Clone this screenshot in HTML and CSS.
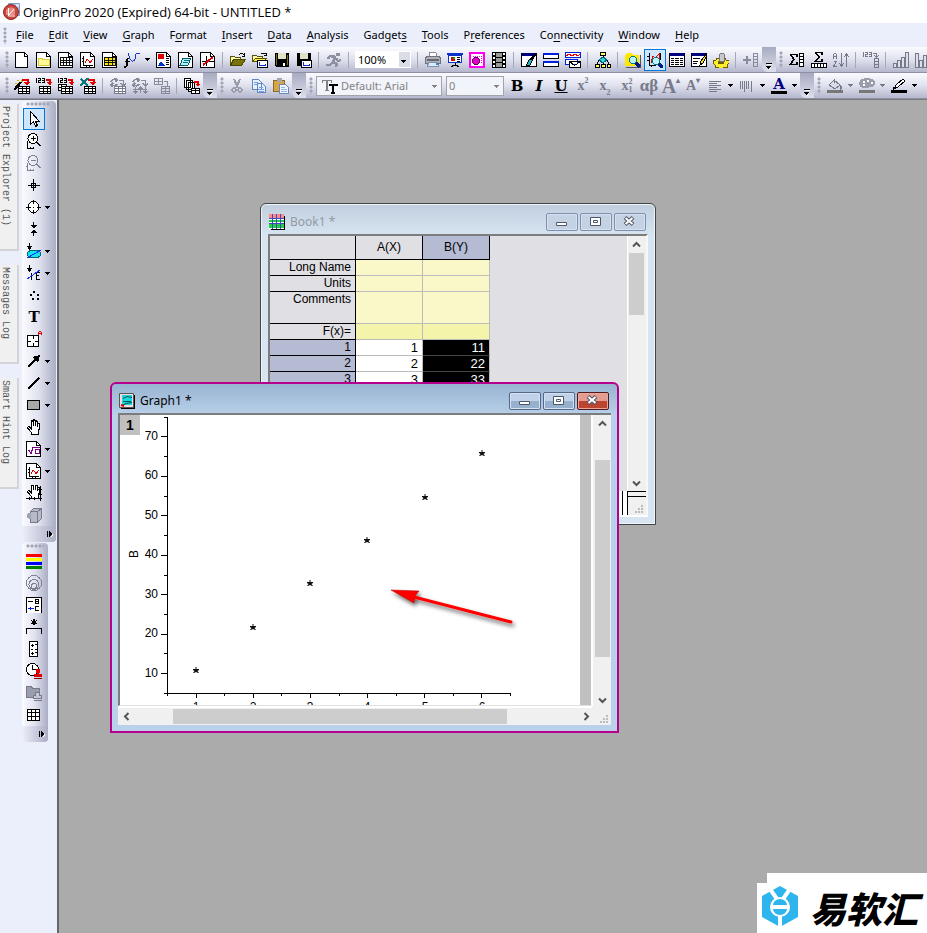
FILE: index.html
```html
<!DOCTYPE html>
<html lang="en">
<head>
<meta charset="utf-8">
<title>OriginPro 2020</title>
<link rel="stylesheet" href="styles.css">
</head>
<body>
<svg class="sprite" aria-hidden="true">
  <symbol id="dd" viewBox="0 0 5 3"><path d="M0 0h5v1H0zM1 1h3v1H1zM2 2h1v1H2z" fill="currentColor"/></symbol>
  <symbol id="more" viewBox="0 0 6 7"><path d="M0 0h6v1H0zM0 3h5v1H0zM1 4h3v1H1zM2 5h1v1H2z"/><path d="M1 1h5v1H1zM3 6h1v1H3zM4 5h1v1H4z" fill="#fff"/></symbol>
  <symbol id="side" viewBox="0 0 6 7"><path d="M0 0h1v6H0zM2 0h1v6H2zM3 1h1v4H3zM4 2h1v2H4z"/><path d="M5 3h1v2H5zM4 5h1v1H4z" fill="#fff"/></symbol>
  <symbol id="page" viewBox="0 0 16 16"><path d="M.5.5h10l4 4v11H.5z" fill="#fff" stroke="#000"/><path d="M10.500.5v4h4" fill="none" stroke="#000"/></symbol>
  <symbol id="new" viewBox="0 0 16 16"><path d="M1.500.5h9l3 3v12h-12z" fill="#fff" stroke="#000"/><path d="M10.500.5v4h3" fill="none" stroke="#000"/></symbol>
  <symbol id="folder" viewBox="0 0 16 16"><use href="#page"/><path d="M2.500 6.500h4v1h7v6h-11z" fill="#fff99a" stroke="#d6c93e"/></symbol>
  <symbol id="book" viewBox="0 0 16 16"><use href="#page"/><path d="M2 5h12v9H2z" fill="#111"/><path d="M3 6h2v2H3zm3 0h2v2H6zm3 0h2v2H9zm3 0h2v2h-2zM3 9h2v1H3zm3 0h2v1H6zm3 0h2v1H9zm3 0h2v1h-2zM3 11h2v2H3zm3 0h2v2H6zm3 0h2v2H9zm3 0h2v2h-2z" fill="#fff"/></symbol>
  <symbol id="graph" viewBox="0 0 16 16"><use href="#page"/><path d="M3.500 4v9.500H13M2 6.500h1M2 9.500h1M6.500 14v1M9.500 14v1" fill="none" stroke="#000"/><path d="M5 11l2-4 2 2 1 2 3-4" fill="none" stroke="#e00000"/></symbol>
  <symbol id="matrix" viewBox="0 0 16 16"><use href="#page"/><path d="M2 5h12v9H2z" fill="#111"/><path d="M3 6h3v2H3zm4 0h3v2H7zm4 0h2v2h-2zM3 9h3v1H3zm4 0h3v1H7zm4 0h2v1h-2zM3 11h3v2H3zm4 0h3v2H7zm4 0h2v2h-2z" fill="#ffe600"/></symbol>
  <symbol id="fx" viewBox="0 0 16 16"><path d="M5 6.500q-2-1-2 2v4q0 3-3 2.500M.5 9.500h5" fill="none" stroke="#000" stroke-width="1.500"/><path d="M4.500 1q1 8 4 8t3-6q1-3 4-1" fill="none" stroke="#1439c8"/></symbol>
  <symbol id="layout" viewBox="0 0 16 16"><use href="#page"/><path d="M2 2h6v5H2z" fill="#e00000"/><path d="M2 14l3-5 4 5z" fill="#0030d0"/><path d="M10 6.500h3M10 8.500h3M10 10.500h3M10 12.500h3" stroke="#000"/></symbol>
  <symbol id="notes" viewBox="0 0 16 16"><use href="#page"/><path d="M5 6h8l-3 7H2z" fill="#b5f3f5" stroke="#056"/><path d="M6 8.500h5M5 10.500h5" stroke="#078"/></symbol>
  <symbol id="image" viewBox="0 0 16 16"><use href="#page"/><path d="M6.500 4v10M2 9.500h12" stroke="#000"/><path d="M3 13L13 5" stroke="#e00000" stroke-width="2"/></symbol>
  <symbol id="open" viewBox="0 0 16 16"><path d="M.5 12.500v-8h4l1 1h5v3" fill="#fff9a0" stroke="#55500a"/><path d="M.5 13.500l3-6h12l-4 6z" fill="#77740a" stroke="#4a4700"/><path d="M9 3q3-3 5 0M14.500 1v3h-3" fill="none" stroke="#000"/></symbol>
  <symbol id="openx" viewBox="0 0 16 16"><path d="M.5 9.500v-6h4l1 1h5v3" fill="#fff9a0" stroke="#55500a"/><path d="M.5 9.500l3-3h11l-3 3z" fill="#ffee45" stroke="#554f00"/><path d="M9 2q3-2 5 0M14.500.5v3h-3" fill="none" stroke="#000"/><path d="M5.500 8.500h10v7h-10z" fill="#fff" stroke="#000"/><path d="M7.500 10v3.500h6v-2" fill="none" stroke="#1030d0"/></symbol>
  <symbol id="save" viewBox="0 0 16 16"><path d="M1 1h14v14H2l-1-1z"/><path d="M4 1h8v6H4z" fill="#dfe2c4"/><path d="M2 2h1v11H2zM13 3h1v10h-1z" fill="#77740a"/><path d="M9 11h2v3H9z" fill="#fff"/></symbol>
  <symbol id="savex" viewBox="0 0 16 16"><path d="M1 1h14v13H1z"/><path d="M4 1h8v6H4z" fill="#dfe2c4"/><path d="M5.500 8.500h10v7h-10z" fill="#fff" stroke="#000"/><path d="M7.500 10v3.500h6v-2" fill="none" stroke="#1030d0"/></symbol>
  <symbol id="run" viewBox="0 0 16 16"><circle cx="12" cy="2.500" r="2" fill="#8d90a0"/><path d="M10 5L4 4 2 7M9 5l-2 5 4 2-1 3M7 10l-3 3H0M10 6l2 3 3-1" fill="none" stroke="#8d90a0" stroke-width="2.500"/></symbol>
  <symbol id="print" viewBox="0 0 16 16"><path d="M4.500 5V.5h6l1 1V5" fill="#fff" stroke="#8a8a94"/><path d="M.5 5.500l2-1h11l2 1v6H.5z" fill="#b0b1b8" stroke="#70717b"/><path d="M2 7h12v2H2z" fill="#666874"/><path d="M3.500 10.500h9l1 4h-11z" fill="#dcecff" stroke="#8090a8"/><path d="M11 11h2v2h-2z" fill="#2288d8"/></symbol>
  <symbol id="slide" viewBox="0 0 16 16"><path d="M0 1h16v2H0z" fill="#0c32c8"/><path d="M1.500 3.500h13v7h-13z" fill="#fff" stroke="#0c32c8"/><circle cx="6" cy="7" r="2.500" fill="#e00000"/><path d="M6 7V4.500A2.500 2.500 0 0 1 8.500 7z" fill="#00a020"/><path d="M10 5.500h3M10 7.500h3M10 9.500h3M8 11v2M4 15l3-2h2l3 2" fill="none" stroke="#000"/></symbol>
  <symbol id="master" viewBox="0 0 16 16"><path d="M1 1h14v14H1z" fill="#fff" stroke="#ff00ee" stroke-width="2"/><circle cx="7" cy="9" r="3.500" fill="#e000c8" stroke="#600060"/><path d="M12.500 4v8M4 4.500h7" stroke="#ff00ee" stroke-dasharray="1 1"/></symbol>
  <symbol id="film" viewBox="0 0 16 16"><path d="M1 0h14v16H1z"/><path d="M5 1h6v4H5zM5 6h6v4H5zM5 11h6v4H5z" fill="#999"/><path d="M3 1v15M13 1v15" stroke="#fff" stroke-width="2" stroke-dasharray="2 2"/></symbol>
  <symbol id="code" viewBox="0 0 16 16"><path d="M.5 1.500h15v13H.5z" fill="#fff" stroke="#000"/><path d="M1 1h14v3H1z" fill="#000080"/><path d="M5 14l3-6 4-1-3 6z" fill="#12b8c8" stroke="#000"/><path d="M9 8l6-6" stroke="#000" stroke-width="2"/></symbol>
  <symbol id="tile" viewBox="0 0 16 16"><path d="M.5 1.500h15v5H.5zM.5 9.500h15v5H.5z" fill="#fff" stroke="#000"/><path d="M0 1h16v2H0zM0 9h16v2H0z" fill="#0020e0"/></symbol>
  <symbol id="mail" viewBox="0 0 16 16"><path d="M.5.5h15v5H.5z" fill="#fff" stroke="#0020e0"/><path d="M1 4l3-2 3 2 3-2 3 2 2-2" fill="none" stroke="#e00000"/><path d="M.5 7.500h12v5H.5z" fill="#fff" stroke="#0020e0"/><path d="M4.500 9.500h11v6h-11zl5 4 6-4" fill="#fff" stroke="#000"/></symbol>
  <symbol id="tree" viewBox="0 0 16 16"><path d="M5.500.5h5v3h-5zM.5 12.500h4v3h-4zM6.500 12.500h4v3h-4zM12 12.500h3.500v3H12z" fill="#ffff60" stroke="#000"/><path d="M8 4v8M4 8L2 12M12 8l2 4" stroke="#000"/><path d="M8 5l4 3-4 3-4-3z" fill="#30d8e0" stroke="#067"/></symbol>
  <symbol id="lens" viewBox="0 0 16 16"><path d="M10 10l5 5" stroke="#001a80" stroke-width="3"/><circle cx="8" cy="8" r="3.500" fill="#b8f4f8" stroke="#087888"/></symbol>
  <symbol id="find" viewBox="0 0 16 16"><path d="M0 3l2-2h5l1 2h6v11H0z" fill="#ffe800"/><path d="M15 3v12H1" fill="none" stroke="#555"/><use href="#lens"/></symbol>
  <symbol id="findg" viewBox="0 0 16 16"><path d="M2.500 1v12.500H9M0 4.500h2M0 8.500h2M4.500 15v-2" fill="none" stroke="#000"/><path d="M4 11l2-7 2 2 4-4v6" fill="none" stroke="#e00000"/><path d="M13.500 1v7" stroke="#000"/><use href="#lens" x="1" y="1"/></symbol>
  <symbol id="list" viewBox="0 0 16 16"><path d="M.5 1.500h15v13H.5z" fill="#fff" stroke="#000"/><path d="M1 1h14v3H1z" fill="#000080"/><path d="M2 6.500h3m1 0h4m1 0h3M2 8.500h3m1 0h4m1 0h3M2 10.500h3m1 0h4m1 0h3M2 12.500h3m1 0h4m1 0h3" stroke="#000"/></symbol>
  <symbol id="edit" viewBox="0 0 16 16"><path d="M.5 1.500h15v13H.5z" fill="#fff" stroke="#000"/><path d="M1 1h14v3H1z" fill="#000080"/><path d="M2 6.500h7M2 9.500h5M2 11.500h4" stroke="#000"/><path d="M9 13l1-4 5-7 1 1-4 8z" fill="#ffe000" stroke="#000"/></symbol>
  <symbol id="gear" viewBox="0 0 16 16"><path d="M0 8h3l1-2h8l1 2h3v3l-2 2v2h-3l-1 1H6l-1-1H2v-2l-2-2z" fill="#ffee28" stroke="#665c00"/><ellipse cx="8" cy="10.500" rx="3" ry="2" fill="#665c00"/><path d="M6 3l2-2 3 1v7H6z" fill="#c8c8ce" stroke="#777"/></symbol>
  <symbol id="addcol" viewBox="0 0 16 16"><path d="M0 8h8M4 4v8" stroke="#888b9b" stroke-width="2"/><path d="M10.500 1.500h4v13h-4zM10 4.500h5M10 7.500h5M10 10.500h5" fill="none" stroke="#888b9b"/></symbol>
  <symbol id="sumcol" viewBox="0 0 16 16"><path d="M8 5V2.500H1.500L5 7.500l-4 5h7V10" fill="none" stroke="#000" stroke-width="1.500"/><path d="M10.500 1.500h4v13h-4zM10 4.500h5M10 7.500h5M10 10.500h5" fill="#fff" stroke="#000"/></symbol>
  <symbol id="sumrow" viewBox="0 0 16 16"><path d="M11 3V.5H4.500L8 5l-4 4.500h7V7" fill="none" stroke="#000" stroke-width="1.500"/><path d="M.5 11.500h15v4H.5zM3.500 11v4M6.500 11v4M9.500 11v4M12.500 11v4" fill="#fff" stroke="#000"/></symbol>
  <symbol id="sort" viewBox="0 0 16 16"><path d="M.5 7V3l1-2h1l1 2v4M1 4.500h3M.5 9.500h3l-3 5h3.500M8.500 1v13M6 11l2.500 3 2.500-3M13.500 2v13M11 5l2.500-3L16 5" fill="none" stroke="#777a8a"/></symbol>
  <symbol id="rank" viewBox="0 0 16 16"><path d="M.5 0v5M2 .5h2v2H2.500v2h2M6 .5h2v4H6m0-2h2M10 1.500h3.500v3M11 3l2.500 2L16 3M11.500 6.500h4v9h-4zM11 9.500h5M11 12.500h5" fill="none" stroke="#777a8a"/></symbol>
  <symbol id="bars" viewBox="0 0 16 16"><path d="M.5 11.500h3v4h-3zM4.500 8.500h3v7h-3zM8.500 5.500h3v10h-3zM12.500.5h3v15h-3z" fill="#dddfe9" stroke="#777a8a"/></symbol>
  <symbol id="bars2" viewBox="0 0 16 16"><path d="M.5 1.500h3v14h-3zM4.500 8.500h3v7h-3zM8.500 3.500h3v12h-3zM12.500 6.500h3v9h-3z" fill="#dddfe9" stroke="#777a8a"/></symbol>
  <symbol id="grid" viewBox="0 0 16 16"><path d="M4.500 8.500h11v7h-11zM4 10.500h12M4 13.500h12M8.500 8v8M12.500 8v8" fill="#fff" stroke="currentColor"/></symbol>
  <symbol id="redarrow" viewBox="0 0 16 16"><path d="M8 2h5.500V5" fill="none" stroke="#e00000" stroke-width="2"/><path d="M10 4h6l-3 4z" fill="#e00000"/></symbol>
  <symbol id="wizard" viewBox="0 0 16 16"><use href="#grid"/><use href="#redarrow"/><path d="M0 12l7-8" stroke="#000" stroke-width="2.500"/><path d="M3 2.500h2M7 1.500v2M1 5.500h2M7 3.500h2" stroke="#d0b800"/></symbol>
  <symbol id="imp1" viewBox="0 0 16 16"><use href="#grid" x="-1"/><path d="M10 2h4v3" fill="none" stroke="#e00000" stroke-width="2"/><path d="M11 4h5l-2 4z" fill="#e00000"/><path d="M.5 0v5M2 .5h2v2H2.500v2H5M6 .5h2.500v4H6m0-2h2" fill="none" stroke="#000"/></symbol>
  <symbol id="imp2" viewBox="0 0 16 16"><path d="M.5 6.500h8v6h-8zM0 9.500h8M3.500 6v6" fill="#fff" stroke="#000"/><use href="#imp1"/></symbol>
  <symbol id="excel" viewBox="0 0 16 16"><use href="#grid"/><use href="#redarrow"/><path d="M1 1l7 7M8 0L0 8" stroke="#087878" stroke-width="2.500"/></symbol>
  <symbol id="recalc" viewBox="0 0 16 16"><use href="#grid"/><path d="M1 4q2-4 5-2M5 0l2 2-2 2M7 6q-2 3-5 1M3 5L1 7l2 2M9 2.500h4.500V7M11 5l2.500 3L16 5" fill="none" stroke="#888b9b" stroke-width="1.500"/></symbol>
  <symbol id="recalc2" viewBox="0 0 16 16"><path d="M1 4q2-4 5-2M5 0l2 2-2 2M7 6q-2 3-5 1M3 5L1 7l2 2M9 2.500h4.500V7M11 5l2.500 3L16 5M3.500 9v6M8.500 9v6M13.500 9v6M1 11.500h14M2 13l1.500 2L5 13M7 11l1.500-2 1.500 2M12 13l1.500 2 1.500-2" fill="none" stroke="#888b9b" stroke-width="1.500"/></symbol>
  <symbol id="tables" viewBox="0 0 16 16"><path d="M.5.500h8v6h-8zM0 3.500h8M4.500 0v6M7.500 8.500h8v7h-8zM7 10.500h9M7 13.500h9M11.500 8v8M10 3.500h3.500v4" fill="none" stroke="#888b9b"/></symbol>
  <symbol id="stack" viewBox="0 0 16 16"><path d="M.5.5h6v9h-6zM2.500 2.500h6v9h-6zM4.500 4.500h6v9h-6z" fill="#fff" stroke="#000"/><path d="M10 4h4v3" fill="none" stroke="#e00000" stroke-width="2"/><path d="M11 6h5l-2 3z" fill="#e00000"/><path d="M7.500 10.500h8v5h-8zM7 12.500h9M11.500 10v6" fill="#fff" stroke="#000"/></symbol>
  <symbol id="cut" viewBox="0 0 16 16"><path d="M5 1l4 9M11 1L7 10" stroke="#9a9daa" stroke-width="2"/><circle cx="5" cy="12" r="2" fill="none" stroke="#9a9daa" stroke-width="1.500"/><circle cx="11" cy="12" r="2" fill="none" stroke="#9a9daa" stroke-width="1.500"/></symbol>
  <symbol id="copy" viewBox="0 0 16 16"><path d="M1.500 1.500h6l3 3v7h-9zM6.500 5.500h5l3 3v6h-8z" fill="#e7f0ff" stroke="#6586bd"/><path d="M3 4.500h4M3 6.500h3M8 9.500h4M8 11.500h5M8 13.500h5" stroke="#6fa0e8"/></symbol>
  <symbol id="paste" viewBox="0 0 16 16"><path d="M.5 2.500h11v11H.5z" fill="#d8a448" stroke="#8c6a28"/><path d="M4 0h5v4H4z" fill="#a8a8b0"/><path d="M6.500 6.500h6l3 3v6h-9z" fill="#f0f6ff" stroke="#6c88b4"/><path d="M8 9.500h4M8 11.500h6M8 13.500h6" stroke="#8fb2e8"/></symbol>
  <symbol id="align" viewBox="0 0 16 16"><path d="M2 3.500h12M2 5.500h8M2 7.500h12M2 9.500h8M2 11.500h12M2 13.500h8" stroke="#777a8a"/></symbol>
  <symbol id="pattern" viewBox="0 0 16 16"><path d="M3.500 3v8M5.500 3v11M7.500 3v8M9.500 3v8M12.500 3v11M1.500 3v8" stroke="#777a8a"/></symbol>
  <symbol id="bucket" viewBox="0 0 16 16"><path d="M2 7l5-5 6 5-5 4zM7 5V1" fill="#d8dae4" stroke="#777a8a"/><path d="M13 7q2 3 0 4" fill="none" stroke="#777a8a" stroke-width="2"/><path d="M0 12h16v3H0z" fill="#777"/></symbol>
  <symbol id="palette" viewBox="0 0 16 16"><path d="M0 5q1-5 9-5 7 1 7 5 0 4-5 4-2 2-5 1-6 0-6-5z" fill="#9a9dac"/><path d="M4 4h2M8 3h2M12 5h2M4 7h2" stroke="#fff" stroke-width="2"/><path d="M0 12h16v3H0z" fill="#777"/></symbol>
  <symbol id="pen" viewBox="0 0 16 16"><path d="M4 10l1-3 7-6 2 2-7 6z" fill="#fff" stroke="#000"/><path d="M2 11l3-2" stroke="#000" stroke-width="2"/><path d="M0 12h16v3H0z"/></symbol>
  <symbol id="pointer" viewBox="0 0 16 16"><path d="M4.500.5v13l3-3 2 5 2-1-2-4h4z" fill="#fff" stroke="#000"/></symbol>
  <symbol id="zoomin" viewBox="0 0 16 16"><circle cx="7" cy="5.500" r="5" fill="#fff" stroke="currentColor"/><path d="M4.500 5.500h5M7 3v5" stroke="currentColor"/><path d="M10.500 9l4 4" stroke="currentColor" stroke-width="2"/><path d="M1.500 8v7.500h6V14M4.500 14v2" fill="none" stroke="currentColor"/></symbol>
  <symbol id="zoomout" viewBox="0 0 16 16"><circle cx="7" cy="5.500" r="5" fill="none" stroke="#7e8192"/><path d="M4.500 5.500h5" stroke="#7e8192"/><path d="M10.500 9l4 4" stroke="#7e8192" stroke-width="2"/><path d="M1.500 8v7.500h6V14M0 11.500h2M4.500 14v2" fill="none" stroke="#7e8192"/></symbol>
  <symbol id="cross" viewBox="0 0 16 16"><path d="M7.500 2v12M2 8.500h12M5.500 6.500h4v4h-4z" fill="none" stroke="#000"/></symbol>
  <symbol id="target" viewBox="0 0 16 16"><circle cx="7.500" cy="8" r="5.500" fill="#fff" stroke="#000"/><path d="M7.500 1v4M7.500 11v4M0 8.500h4.500M10.500 8.500H15M7 8.500h1" stroke="#000"/></symbol>
  <symbol id="select" viewBox="0 0 16 16"><path d="M4 4h7L7.500 7.500zM4 12h7L7.500 8.500z"/><path d="M7.500 1v5M7.500 10v5" stroke="#000"/></symbol>
  <symbol id="mask" viewBox="0 0 16 16"><ellipse cx="8" cy="11" rx="7" ry="4" fill="#18e2ea" stroke="#067"/><path d="M1 15L15 7" stroke="#1030ff"/><path d="M3.500 0v4M1 3h5L3.500 6z" stroke="#000"/></symbol>
  <symbol id="region" viewBox="0 0 16 16"><path d="M5.500 15V8M14 7.500h-4v7h4M10 10.500h3" fill="none" stroke="#000"/><path d="M1 14L14 5" stroke="#1030ff"/><path d="M3.500 0v4M1 3h5L3.500 6z" stroke="#000"/></symbol>
  <symbol id="dots" viewBox="0 0 16 16"><path d="M7 4h2v2H7zM4 7h2v2H4zM11 7h2v2h-2zM6 11h2v2H6zM11 11h2v2h-2z"/></symbol>
  <symbol id="annot" viewBox="0 0 16 16"><path d="M1.500 4.500h11v11h-11zM7.500 4v4M7.500 12v4M1 10.500h4M9 10.500h4" fill="#fff" stroke="#000"/><path d="M12.500 4V1.500L14 0l1.500 1.500V4M12 2.500h4" fill="none" stroke="#e00000"/></symbol>
  <symbol id="arrow" viewBox="0 0 16 16"><path d="M2 14L11 5" stroke="#000" stroke-width="2"/><path d="M6 4l8-2-2 8z"/></symbol>
  <symbol id="line" viewBox="0 0 16 16"><path d="M2 14L13 3" stroke="#000" stroke-width="1.500"/></symbol>
  <symbol id="rect" viewBox="0 0 16 16"><path d="M1.500 3.500h12v9h-12z" fill="#a8a8a8" stroke="#000"/></symbol>
  <symbol id="hand" viewBox="0 0 16 16"><path d="M5.500 15.500v-2L1.500 9q0-2 2-1L5 9.500v-7q1-1.500 2 0v4-5q1-1.500 2 0v5-4q1-1.500 2 0v5-3q1.500-1 2 0v6l-1 3v2z" fill="#fff" stroke="#000"/></symbol>
  <symbol id="formula" viewBox="0 0 16 16"><use href="#page"/><path d="M2 10l1-1 2 4 2-7h7M13 8.500H9.500v4H13V8" fill="none" stroke="#80008c"/></symbol>
  <symbol id="pan" viewBox="0 0 16 16"><use href="#hand" y="-2"/><path d="M14.500 1v15M0 13.500h16M12 4.500h4M12 9.500h4M3.500 12v3M8.500 12v3" stroke="#000"/></symbol>
  <symbol id="cube" viewBox="0 0 16 16"><path d="M4.500 4.500l3-3h8v10l-4 4h-7z" fill="#b7bac8" stroke="#777a8a"/><path d="M4.500 4.500h7v11M11.500 4.500l4-3" fill="none" stroke="#777a8a"/><path d="M3 6q-3 1-2 5l4 1V6" fill="#a0a3b4"/></symbol>
  <symbol id="colors" viewBox="0 0 16 16"><path d="M0 1h16v3H0z" fill="#f00"/><path d="M0 5h16v3H0z" fill="#ff0"/><path d="M0 9h16v3H0z" fill="#00f"/><path d="M0 13h16v3H0z" fill="#008000"/></symbol>
  <symbol id="rings" viewBox="0 0 16 16"><circle cx="8" cy="8" r="7.500" fill="none" stroke="#7f8294"/><circle cx="8" cy="9.500" r="5" fill="none" stroke="#7f8294"/><circle cx="8" cy="11" r="2.500" fill="none" stroke="#7f8294"/></symbol>
  <symbol id="legend" viewBox="0 0 16 16"><path d="M.5 16V.500h15V16" fill="#fff" stroke="#000"/><path d="M2 4.500h5M9.500 2v5M9 2.500h3.500v2H9m3.500 0v2H9M12.500 9.500h-3v4h3.500" fill="none" stroke="#000"/><path d="M2 11.500h6M4.500 10v3" stroke="#0020e0"/></symbol>
  <symbol id="bracket" viewBox="0 0 16 16"><path d="M8 0v6M5 1.500l6 3.500M11 1.500L5 5M.5 15V9.500h15V15" fill="none" stroke="#000" stroke-width="1.200"/></symbol>
  <symbol id="scale" viewBox="0 0 16 16"><path d="M3.500.5h8v15h-8z" fill="#fff" stroke="#000"/><path d="M5 4.500h3M6.500 3v3M9 3.500h2M5 8.500h2M9 8.500h2M5 12.500h3M6.500 11v3M9 11.500h2" stroke="#000"/></symbol>
  <symbol id="clock" viewBox="0 0 16 16"><circle cx="6.500" cy="6.500" r="6" fill="#fff" stroke="#000"/><path d="M6.500 2v4.500H10" fill="none" stroke="#000"/><path d="M10 6h4v3l-1 2h3v3H8v-3h3l-1-2z" fill="#e00000"/><path d="M8 15.500h8" stroke="#800"/></symbol>
  <symbol id="stamp" viewBox="0 0 16 16"><path d="M.5 1.500h5l1 2h7v9H.5z" fill="#9a9dac" stroke="#777a8a"/><path d="M9.500 7.500h4v3h2v3h-8v-3h2zM8 15.500h8" fill="#c5c7d3" stroke="#777a8a"/></symbol>
  <symbol id="table" viewBox="0 0 16 16"><path d="M1.500 2.500h12v11h-12zM1 5.500h13M1 9.500h13M5.500 2v12M9.500 2v12" fill="#fff" stroke="#000"/></symbol>
  <symbol id="tt" viewBox="0 0 16 16"><path d="M.5 5V2.500h9V5M5 2v10M3 12.500h4" fill="none" stroke="#828282" stroke-width="1.500"/><path d="M7.500 8V6.500h7V8M11 6v8M9 14.500h4" fill="none" stroke="#000" stroke-width="2"/></symbol>
  <symbol id="min" viewBox="0 0 14 14"><path d="M1.500 7.500h10v3h-10z" fill="#fff" stroke="#50566a"/></symbol>
  <symbol id="max" viewBox="0 0 14 14"><path d="M1.500 2.500h10v8h-10zM4.500 5.500h4v2h-4z" fill="#fff" stroke="#50566a"/></symbol>
  <symbol id="close" viewBox="0 0 14 14"><path d="M2 2.500l8 7M10 2.500l-8 7" stroke="#50566a" stroke-width="4"/><path d="M2.500 3l7 6M9.500 3l-7 6" stroke="#fff" stroke-width="2"/></symbol>
  <symbol id="chev" viewBox="0 0 9 6"><path d="M1 5l3.500-3.500L8 5" fill="none" stroke="#555" stroke-width="2"/></symbol>
</svg>

<header class="title">
  <svg class="logo" viewBox="0 0 17 17" aria-hidden="true"><path d="M5.500.5h11v12h-11z" fill="#dce8fa" stroke="#7a9ad4"/><path d="M12 1v11M6 5h10" stroke="#8eaadd"/><circle cx="8" cy="9" r="7.500" fill="#c8453c" stroke="#8e2824"/><path d="M3 7q4-5 9-1v6H3z" fill="#e88a80"/><path d="M5.500 5v8H12M6 12l5-6" fill="none" stroke="#fff"/></svg>
  <h1>OriginPro 2020 (Expired) 64-bit - UNTITLED *</h1>
</header>

<nav class="menu" aria-label="Main">
  <span class="grip"></span>
  <button><u>F</u>ile</button><button><u>E</u>dit</button><button><u>V</u>iew</button><button><u>G</u>raph</button><button>F<u>o</u>rmat</button><button><u>I</u>nsert</button><button><u>D</u>ata</button><button><u>A</u>nalysis</button><button>Gadget<u>s</u></button><button><u>T</u>ools</button><button>P<u>r</u>eferences</button><button>Co<u>n</u>nectivity</button><button><u>W</u>indow</button><button><u>H</u>elp</button>
</nav>

<div class="row">
  <div class="bar" role="toolbar" aria-label="Standard">
    <span class="grip"></span>
    <button aria-label="New project"><svg><use href="#new"/></svg></button>
    <button aria-label="New folder"><svg><use href="#folder"/></svg></button>
    <button aria-label="New workbook"><svg><use href="#book"/></svg></button>
    <button aria-label="New graph"><svg><use href="#graph"/></svg></button>
    <button aria-label="New matrix"><svg><use href="#matrix"/></svg></button>
    <button aria-label="New function"><svg><use href="#fx"/></svg></button>
    <button class="dd" aria-label="Function types"><svg><use href="#dd"/></svg></button>
    <button aria-label="New layout"><svg><use href="#layout"/></svg></button>
    <button aria-label="New notes"><svg><use href="#notes"/></svg></button>
    <button aria-label="New image"><svg><use href="#image"/></svg></button>
    <span class="sep"></span>
    <button aria-label="Open"><svg><use href="#open"/></svg></button>
    <button aria-label="Open template"><svg><use href="#openx"/></svg></button>
    <button aria-label="Save"><svg><use href="#save"/></svg></button>
    <button aria-label="Save template"><svg><use href="#savex"/></svg></button>
    <span class="sep"></span>
    <button aria-label="Run"><svg><use href="#run"/></svg></button>
    <span class="sep"></span>
    <span class="combo zoom"><select aria-label="Zoom"><option>100%</option></select><svg class="tri"><use href="#dd"/></svg></span>
    <span class="sep"></span>
    <button aria-label="Print"><svg><use href="#print"/></svg></button>
    <button aria-label="Slide show"><svg><use href="#slide"/></svg></button>
    <button aria-label="Send graphs"><svg><use href="#master"/></svg></button>
    <button aria-label="Video"><svg><use href="#film"/></svg></button>
    <span class="sep"></span>
    <button aria-label="Code builder"><svg><use href="#code"/></svg></button>
    <button aria-label="Tile"><svg><use href="#tile"/></svg></button>
    <button aria-label="Digitizer"><svg><use href="#mail"/></svg></button>
    <span class="sep"></span>
    <button aria-label="Hierarchy"><svg><use href="#tree"/></svg></button>
    <span class="sep"></span>
    <button aria-label="Find"><svg><use href="#find"/></svg></button>
    <button class="on" aria-label="Find graph"><svg><use href="#findg"/></svg></button>
    <button aria-label="Results log"><svg><use href="#list"/></svg></button>
    <button aria-label="Command window"><svg><use href="#edit"/></svg></button>
    <button aria-label="Settings"><svg><use href="#gear"/></svg></button>
    <span class="sep"></span>
    <button aria-label="Add column"><svg><use href="#addcol"/></svg></button>
    <button class="more" aria-label="More"><svg><use href="#more"/></svg></button>
  </div>
  <div class="bar last" role="toolbar" aria-label="Worksheet data">
    <span class="grip"></span>
    <button aria-label="Column statistics"><svg><use href="#sumcol"/></svg></button>
    <button aria-label="Row statistics"><svg><use href="#sumrow"/></svg></button>
    <button aria-label="Sort"><svg><use href="#sort"/></svg></button>
    <span class="sep"></span>
    <button aria-label="Row numbers"><svg><use href="#rank"/></svg></button>
    <span class="sep"></span>
    <button aria-label="Sorted values"><svg><use href="#bars"/></svg></button>
    <button aria-label="Random values"><svg><use href="#bars2"/></svg></button>
  </div>
</div>

<div class="row">
  <div class="bar" role="toolbar" aria-label="Import">
    <span class="grip"></span>
    <button aria-label="Import wizard"><svg><use href="#wizard"/></svg></button>
    <button aria-label="Import ASCII"><svg><use href="#imp1"/></svg></button>
    <button aria-label="Import multiple"><svg><use href="#imp2"/></svg></button>
    <button aria-label="Import Excel"><svg><use href="#excel"/></svg></button>
    <span class="sep"></span>
    <button class="off" aria-label="Reimport"><svg><use href="#recalc"/></svg></button>
    <button class="off" aria-label="Recalculate"><svg><use href="#recalc2"/></svg></button>
    <button class="off" aria-label="Clone"><svg><use href="#tables"/></svg></button>
    <span class="sep"></span>
    <button aria-label="Batch"><svg><use href="#stack"/></svg></button>
    <button class="more" aria-label="More"><svg><use href="#more"/></svg></button>
  </div>
  <div class="bar" role="toolbar" aria-label="Clipboard">
    <span class="grip"></span>
    <button aria-label="Cut"><svg><use href="#cut"/></svg></button>
    <button aria-label="Copy"><svg><use href="#copy"/></svg></button>
    <button aria-label="Paste"><svg><use href="#paste"/></svg></button>
    <button class="more" aria-label="More"><svg><use href="#more"/></svg></button>
  </div>
  <div class="bar" role="toolbar" aria-label="Format">
    <span class="grip"></span>
    <span class="combo font"><svg class="tt" aria-hidden="true"><use href="#tt"/></svg><select aria-label="Font"><option>Default: Arial</option></select><svg class="tri"><use href="#dd"/></svg></span>
    <span class="combo size"><select aria-label="Font size"><option>0</option></select><svg class="tri"><use href="#dd"/></svg></span>
    <button class="glyph"><b>B</b></button>
    <button class="glyph"><b><i>I</i></b></button>
    <button class="glyph"><b><u>U</u></b></button>
    <button class="glyph dim">x<sup>2</sup></button>
    <button class="glyph dim">x<sub>2</sub></button>
    <button class="glyph dim">x<span class="both"><span>2</span><span>1</span></span></button>
    <button class="glyph dim greek">αβ</button>
    <button class="glyph dim big">A<sup>▴</sup></button>
    <button class="glyph dim">A<sup>▾</sup></button>
    <button aria-label="Alignment"><svg><use href="#align"/></svg></button>
    <button class="dd" aria-label="Alignment options"><svg><use href="#dd"/></svg></button>
    <button aria-label="Line pattern"><svg><use href="#pattern"/></svg></button>
    <button class="dd" aria-label="Line pattern options"><svg><use href="#dd"/></svg></button>
    <button class="glyph color"><b>A</b></button>
    <button class="dd" aria-label="Font color options"><svg><use href="#dd"/></svg></button>
    <button class="more" aria-label="More"><svg><use href="#more"/></svg></button>
  </div>
  <div class="bar last" role="toolbar" aria-label="Style">
    <span class="grip"></span>
    <button aria-label="Fill"><svg><use href="#bucket"/></svg></button>
    <button class="dd off" aria-label="Fill options"><svg><use href="#dd"/></svg></button>
    <button aria-label="Palette"><svg><use href="#palette"/></svg></button>
    <button class="dd off" aria-label="Palette options"><svg><use href="#dd"/></svg></button>
    <button aria-label="Line color"><svg><use href="#pen"/></svg></button>
    <button class="dd" aria-label="Line color options"><svg><use href="#dd"/></svg></button>
  </div>
</div>

<div class="body">
  <aside class="docks">
    <button>Project Explorer (1)</button>
    <button>Messages Log</button>
    <button>Smart Hint Log</button>
  </aside>
  <div class="palettes">
    <div class="pal wide" role="toolbar" aria-label="Tools">
      <span class="hgrip"></span>
      <div class="t"><button class="on" aria-label="Pointer"><svg><use href="#pointer"/></svg></button></div>
      <div class="t"><button aria-label="Zoom in"><svg><use href="#zoomin"/></svg></button></div>
      <div class="t"><button aria-label="Zoom out"><svg><use href="#zoomout"/></svg></button></div>
      <div class="t"><button aria-label="Screen reader"><svg><use href="#cross"/></svg></button></div>
      <div class="t"><button aria-label="Data reader"><svg><use href="#target"/></svg></button><svg class="tri"><use href="#dd"/></svg></div>
      <div class="t"><button aria-label="Data selector"><svg><use href="#select"/></svg></button></div>
      <div class="t"><button aria-label="Mask"><svg><use href="#mask"/></svg></button><svg class="tri"><use href="#dd"/></svg></div>
      <div class="t"><button aria-label="Region"><svg><use href="#region"/></svg></button><svg class="tri"><use href="#dd"/></svg></div>
      <div class="t"><button aria-label="Draw data"><svg><use href="#dots"/></svg></button></div>
      <div class="t"><button class="glyph">T</button></div>
      <div class="t"><button aria-label="Annotation"><svg><use href="#annot"/></svg></button></div>
      <div class="t"><button aria-label="Arrow"><svg><use href="#arrow"/></svg></button><svg class="tri"><use href="#dd"/></svg></div>
      <div class="t"><button aria-label="Line"><svg><use href="#line"/></svg></button><svg class="tri"><use href="#dd"/></svg></div>
      <div class="t"><button aria-label="Rectangle"><svg><use href="#rect"/></svg></button><svg class="tri"><use href="#dd"/></svg></div>
      <div class="t"><button aria-label="Pan"><svg><use href="#hand"/></svg></button></div>
      <div class="t"><button aria-label="Equation"><svg><use href="#formula"/></svg></button><svg class="tri"><use href="#dd"/></svg></div>
      <div class="t"><button aria-label="Insert graph"><svg><use href="#graph"/></svg></button><svg class="tri"><use href="#dd"/></svg></div>
      <div class="t"><button aria-label="Rescale"><svg><use href="#pan"/></svg></button></div>
      <div class="t"><button aria-label="Rotate"><svg><use href="#cube"/></svg></button></div>
      <button class="foot" aria-label="More"><svg><use href="#side"/></svg></button>
    </div>
    <div class="pal" role="toolbar" aria-label="Graph tools">
      <span class="hgrip"></span>
      <div class="t"><button aria-label="Color scale"><svg><use href="#colors"/></svg></button></div>
      <div class="t"><button aria-label="Bubble scale"><svg><use href="#rings"/></svg></button></div>
      <div class="t"><button aria-label="Legend"><svg><use href="#legend"/></svg></button></div>
      <div class="t"><button aria-label="Asterisk bracket"><svg><use href="#bracket"/></svg></button></div>
      <div class="t"><button aria-label="XY scale"><svg><use href="#scale"/></svg></button></div>
      <div class="t"><button aria-label="Date and time"><svg><use href="#clock"/></svg></button></div>
      <div class="t"><button aria-label="Project path"><svg><use href="#stamp"/></svg></button></div>
      <div class="t"><button aria-label="New table"><svg><use href="#table"/></svg></button></div>
      <button class="foot" aria-label="More"><svg><use href="#side"/></svg></button>
    </div>
  </div>

  <main class="desk">
    <section class="win bookwin" aria-label="Book1">
      <div class="cap">
        <svg viewBox="0 0 16 16" aria-hidden="true"><path d="M2 2h14v14H2z"/><path d="M0 0h15v15H0z" fill="#fff"/><path d="M0 0h15v4H0z" fill="#f88"/><path d="M0 6h15v2H0zM0 10h15v4H0z" fill="#20d040"/><path d="M3.500 0v15M7.500 0v15M11.500 0v15M0 4.500h15M0 9.500h15" stroke="#4048c0"/></svg>
        <h2>Book1 *</h2>
        <button aria-label="Minimize"><svg><use href="#min"/></svg></button><button aria-label="Maximize"><svg><use href="#max"/></svg></button><button aria-label="Close"><svg><use href="#close"/></svg></button>
      </div>
      <div class="client">
        <div class="view">
          <table>
            <thead><tr><th></th><th>A(X)</th><th class="sel">B(Y)</th></tr></thead>
            <tbody>
              <tr class="meta"><th>Long Name</th><td></td><td></td></tr>
              <tr class="meta"><th>Units</th><td></td><td></td></tr>
              <tr class="meta tall"><th>Comments</th><td></td><td></td></tr>
              <tr class="meta fx"><th>F(x)=</th><td></td><td></td></tr>
              <tr><th>1</th><td>1</td><td class="sel">11</td></tr>
              <tr><th>2</th><td>2</td><td class="sel">22</td></tr>
              <tr><th>3</th><td>3</td><td class="sel">33</td></tr>
              <tr><th>4</th><td>4</td><td class="sel">44</td></tr>
              <tr><th>5</th><td>5</td><td class="sel">55</td></tr>
              <tr><th>6</th><td>6</td><td class="sel">66</td></tr>
            </tbody>
          </table>
        </div>
        <div class="vbar"><svg class="chev"><use href="#chev"/></svg><span class="thumb"></span><span class="rest"></span><svg class="chev down"><use href="#chev"/></svg></div>
        <div class="tabs"></div>
        <div class="corner"><svg viewBox="0 0 8 8"><path d="M6 0h2v2H6zM3 3h2v2H3zM6 3h2v2H6zM0 6h2v2H0zM3 6h2v2H3zM6 6h2v2H6z" fill="#bbb"/></svg></div>
      </div>
    </section>

    <section class="win graphwin" aria-label="Graph1">
      <div class="cap">
        <svg viewBox="0 0 16 16" aria-hidden="true"><path d="M2 2h14v14H2z"/><path d="M.5.5h14v14H.5z" fill="#f4dada" stroke="#555"/><path d="M3 2h10v10H3z" fill="#18d8e0"/><path d="M4 5.500l4-2 5 1M4 8.500h8M3 12.500l4-2 6-1" fill="none" stroke="#055"/><path d="M2 12l3 1" stroke="#e00000" stroke-width="2"/></svg>
        <h2>Graph1 *</h2>
        <button aria-label="Minimize"><svg><use href="#min"/></svg></button><button aria-label="Maximize"><svg><use href="#max"/></svg></button><button class="x" aria-label="Close"><svg><use href="#close"/></svg></button>
      </div>
      <div class="client">
        <div class="view">
          <svg class="plot" viewBox="120 415 460 291" role="img" aria-label="Scatter plot of B">
            <defs>
              <path id="star" d="M-.5-3h1V-1H3V0L1.500 1 3 3H2L0 2l-2 1h-1l1.500-2L-3 0V-1h2.500z" fill="#111"/>
              <filter id="sh" x="-20%" y="-30%" width="140%" height="190%"><feDropShadow dx="2" dy="3" stdDeviation="2" flood-opacity=".6"/></filter>
            </defs>
            <path class="axis" d="M167.500 417V694M164 693.500H511M161 436.500h6M161 476.500h6M161 515.500h6M161 555.500h6M161 594.500h6M161 634.500h6M161 673.500h6M164 417.500h3M164 456.500h3M164 496.500h3M164 535.500h3M164 575.500h3M164 614.500h3M164 653.500h3M196.500 693v5M253.500 693v5M310.500 693v5M367.500 693v5M424.500 693v5M481.500 693v5M167.500 693v3M224.500 693v3M281.500 693v3M339.500 693v3M396.500 693v3M453.500 693v3M510.500 693v3"/>
            <g class="ynum"><text x="158" y="440">70</text><text x="158" y="479">60</text><text x="158" y="519">50</text><text x="158" y="558">40</text><text x="158" y="598">30</text><text x="158" y="637">20</text><text x="158" y="677">10</text></g>
            <g class="xnum"><text x="196" y="711">1</text><text x="253" y="711">2</text><text x="310" y="711">3</text><text x="367" y="711">4</text><text x="425" y="711">5</text><text x="482" y="711">6</text></g>
            <text class="ylab" transform="translate(138 554) rotate(-90)">B</text>
            <use href="#star" x="196" y="670"/><use href="#star" x="253" y="627"/><use href="#star" x="310" y="583"/><use href="#star" x="367" y="540"/><use href="#star" x="425" y="497"/><use href="#star" x="482" y="453"/>
            <g filter="url(#sh)"><path d="M391 590l28 1-4 5-1 7z" fill="#f00" stroke="#a00" stroke-width=".5"/><path d="M414 597l97 25" stroke="#f00" stroke-width="3" stroke-linecap="round"/></g>
          </svg>
          <button class="layer">1</button>
        </div>
        <div class="vbar"><svg class="chev"><use href="#chev"/></svg><span class="thumb"></span><span class="rest"></span><svg class="chev down"><use href="#chev"/></svg></div>
        <div class="hbar"><svg class="chev left"><use href="#chev"/></svg><span class="thumb"></span><span class="rest"></span><svg class="chev right"><use href="#chev"/></svg></div>
        <div class="corner"><svg viewBox="0 0 8 8"><path d="M6 0h2v2H6zM3 3h2v2H3zM6 3h2v2H6zM0 6h2v2H0zM3 6h2v2H3zM6 6h2v2H6z" fill="#bbb"/></svg></div>
      </div>
    </section>

    <div class="brand">
      <svg viewBox="0 0 38 42" aria-hidden="true"><path d="M19 0l18 10v21L19 41 1 31V10z" fill="#2fb5ee"/><path d="M9 3l7 10M29 3l-7 10M19 30v12" fill="none" stroke="#fff" stroke-width="4"/><circle cx="19" cy="21" r="10" fill="#fff"/><path d="M12 19a7 6 0 0 1 14 0zM12 23h14a7 6 0 0 1-14 0z" fill="#2fb5ee"/></svg>
      <strong lang="zh-CN">易软汇</strong>
    </div>
  </main>
</div>
</body>
</html>
```
FILE: styles.css
```css
* { box-sizing: border-box; }
body {
  margin: 0;
  height: 100vh;
  display: flex;
  flex-direction: column;
  overflow: hidden;
  background: #ebeffc;
  color: #000;
  font: 12px/16px "Noto Sans", "Open Sans", sans-serif;
}
button, select { font: inherit; color: inherit; margin: 0; padding: 0; border: 0; background: none; }
h1, h2 { margin: 0; font-weight: 400; }
.sprite { position: absolute; width: 0; height: 0; }

.title { display: flex; align-items: center; gap: 3px; height: 23px; padding-left: 3px; background: #fff; }
.title h1 { font: 13px/16px "Open Sans", "Noto Sans", sans-serif; }
.logo { width: 17px; height: 17px; }

.menu { display: flex; align-items: center; height: 24px; padding-left: 3px; font-size: 11px; background: #ebeffc; }
.menu button { padding: 0 8px 0 7px; white-space: nowrap; }
.menu u { text-underline-offset: 2px; }
.grip {
  flex: none;
  width: 6px;
  height: 17px;
  background: radial-gradient(circle at 2px 2px, #a3a5b5 1px, transparent 2px) 0 0 / 7px 4px;
}

.row { display: flex; height: 26px; padding-left: 2px; overflow: hidden; border-bottom: 1px solid #8e90a5; background: linear-gradient(#fbfbff, #dfe1ee 50%, #b5b8cd); }
.bar {
  flex: none;
  display: flex;
  align-items: center;
  padding-left: 3px;
}
.bar.last { flex: 1 0 auto; }
.last .grip { margin-right: 1px; }
.bar svg, .pal svg { shape-rendering: crispEdges; }
.bar button { flex: none; width: 22px; height: 22px; display: flex; align-items: center; justify-content: center; }
.bar button svg { width: 16px; height: 16px; }
.bar .dd { width: 11px; margin-left: -1px; }
.bar .dd svg { width: 5px; height: 3px; }
.off { color: #777a8a; }
.bar .more { width: 14px; height: 25px; align-items: flex-end; padding-bottom: 2px; background: linear-gradient(#a8abc0, #dddfec); border-radius: 0 0 0 6px; }
.bar .more svg { width: 6px; height: 7px; }
.sep { flex: none; width: 1px; height: 16px; margin: 0 4px 0 3px; background: #a6a8b8; }
.bar .on, .pal .on { background: #cfe6fa; border: 1px solid #0078d7; }

.combo { position: relative; flex: none; display: flex; align-items: center; background: #fff; }
.combo select { appearance: none; width: 100%; height: 100%; padding-left: 2px; outline: 0; }
.tri { width: 5px; height: 3px; }
.combo .tri { position: absolute; right: 4px; top: 8px; pointer-events: none; }
.zoom { width: 56px; height: 17px; margin: 0 3px 0 2px; font-size: 11px; background: linear-gradient(90deg, #fff 43px, #dadce8 43px); border: 1px solid #fff; }
.font, .size { height: 20px; color: #828282; border: 1px solid #a3a3a8; background: #f2f4fb; font-size: 11px; }
.font { width: 126px; margin: 0 4px 0 1px; padding-left: 22px; }
.size { width: 58px; margin-right: 2px; }
.tt { position: absolute; left: 5px; top: 1px; width: 16px; height: 16px; }
.glyph { font: bold 15px/20px "DejaVu Serif", serif; }
.glyph.dim { color: #777a8a; font: bold 14px/20px "Liberation Serif", serif; }
.glyph sup, .glyph sub { font-size: 8px; line-height: 8px; align-self: flex-start; margin-top: 2px; }
.glyph sub { align-self: flex-end; }
.both { display: flex; flex-direction: column; font-size: 8px; line-height: 8px; }
.glyph.greek { font-size: 17px; }
.glyph.big { font-size: 20px; }
.color b { width: 16px; font-size: 15px; line-height: 13px; color: #000080; border-bottom: 3px solid #000; }

.body { flex: 1; min-height: 0; display: flex; border-top: 1px solid #777; }
.docks { flex: none; width: 19px; display: flex; flex-direction: column; align-items: flex-start; gap: 14px; padding-top: 4px; }
.docks button {
  display: flex;
  writing-mode: vertical-rl;
  width: 19px;
  padding: 2px 5px 23px 0;
  background: #f0f0f0;
  border: solid #d4d4d8;
  border-width: 0 2px 2px 0;
  color: #555;
  font: 10px/13px "Liberation Mono", monospace;
}
.palettes { flex: none; width: 38px; padding: 1px 1px 0 3px; }
.pal { display: flex; flex-direction: column; width: 26px; margin-bottom: 1px; border-radius: 4px; background: linear-gradient(90deg, #fbfbff, #dfe1ee 50%, #abaec4); }
.pal.wide { width: 34px; }
.hgrip { width: 18px; height: 5px; margin: 1px 0 1px 4px; background: radial-gradient(circle at 2px 2px, #a3a5b5 1px, transparent 2px) 0 0 / 4px 7px; }
.wide .hgrip { width: 24px; }
.t { display: flex; align-items: center; height: 22px; padding-left: 1px; }
.t button { width: 22px; height: 22px; display: flex; align-items: center; justify-content: center; }
.t button svg { width: 16px; height: 16px; }
.foot { height: 16px; display: flex; align-items: center; justify-content: flex-end; padding-right: 3px; background: linear-gradient(90deg, #eceefa, #abaec4); border-radius: 0 0 4px 4px; }
.foot svg { width: 6px; height: 7px; }

.desk { position: relative; flex: 1; min-width: 0; overflow: hidden; background: #ababab; border-left: 2px solid #65656b; }
.win { position: absolute; display: flex; flex-direction: column; }
.bookwin { left: 201px; top: 103px; width: 396px; height: 322px; padding: 0 7px 7px; border: 1px solid #444; border-radius: 6px 6px 0 0; background: linear-gradient(#c1cedd, #d7e4f2 32px); box-shadow: inset 0 0 0 1px #eef4fb; }
.graphwin { left: 51px; top: 282px; width: 509px; height: 351px; padding: 0 6px 6px; border: 2px solid #b4008c; border-radius: 6px 6px 0 0; background: linear-gradient(#99b4d1, #b9d1ea 32px); }
.cap { flex: none; display: flex; align-items: center; gap: 2px; height: 30px; padding: 6px 2px 0 1px; }
.graphwin .cap { height: 29px; padding-top: 4px; }
.cap > svg { width: 16px; height: 16px; }
.cap h2 { flex: 1; padding-left: 3px; font-size: 12px; line-height: 16px; }
.bookwin h2 { color: #929aa4; }
.cap button { width: 32px; height: 18px; display: flex; align-items: center; justify-content: center; border: 1px solid #7e90ae; border-radius: 2px; background: #c4d2e3; box-shadow: inset 0 0 0 1px #d6e2f0; }
.graphwin .cap button { border-color: #56688a; background: linear-gradient(#bfd2e9 50%, #96b0cd 50%); }
.graphwin .cap .x { border-color: #52181c; background: linear-gradient(#e29c90 50%, #bc4530 50%); box-shadow: inset 0 0 0 1px #e8a69c; }
.cap button svg { width: 14px; height: 14px; }
.client { flex: 1; min-height: 0; display: grid; background: #f0f0f0; border-top: 2px solid #7c7c7c; }
.bookwin .client { grid-template: 1fr 24px / 1fr 19px; border-left: 2px solid #7c7c7c; border-right: 2px solid #f7f7f7; border-bottom: 2px solid #fff; }
.graphwin .client { grid-template: 1fr 19px / 1fr 19px; }
.view { position: relative; overflow: hidden; min-width: 0; min-height: 0; }
.bookwin .view { background: #e0dfe4; }
.graphwin .view { display: flex; background: #c0c0c0; border-left: 2px solid #7c7c7c; border-right: 1px solid #fff; border-bottom: 1px solid #e0e0e0; }

table { table-layout: fixed; width: 220px; border-collapse: separate; border-spacing: 0; font: 13px/15px "Liberation Sans", sans-serif; }
th, td { height: 16px; padding: 0 4px; text-align: right; vertical-align: top; font-weight: 400; }
th { width: 86px; border-right: 1px solid #000; border-bottom: 1px solid #000; background: #e0dfe4; }
tbody th { font-size: 12px; }
thead th { width: 67px; height: 24px; vertical-align: middle; text-align: center; font-size: 12px; }
thead th:first-child { width: 86px; }
thead .sel, tbody th { background: #b5bbd3; }
.meta th { background: #e0dfe4; }
td { background: #fff; border-right: 1px solid #bbb; border-bottom: 1px solid #bbb; }
.meta td { background: #faf8c8; }
.meta.fx td { background: #f5f4ab; }
.tall th, .tall td { height: 32px; }
td.sel { background: #000; color: #fff; border-bottom-color: #444; }

.vbar, .hbar { display: flex; align-items: center; background: #f0f0f0; }
.vbar { flex-direction: column; padding: 4px 2px 3px 1px; border-left: 1px solid #fff; }
.graphwin .vbar { padding: 4px 1px 1px 2px; }
.chev { flex: none; width: 9px; height: 9px; }
.down { transform: rotate(180deg); }
.left { transform: rotate(-90deg); }
.right { transform: rotate(90deg); }
.thumb { background: #cdcdcd; }
.vbar .thumb { width: 15px; height: 62px; margin-top: 4px; }
.graphwin .vbar .thumb { height: 197px; margin-top: 32px; }
.rest { flex: 1; }
.hbar { padding: 0 1px 0 4px; border-top: 2px solid #fff; }
.hbar .thumb { width: 334px; height: 15px; margin-left: 42px; }
.tabs { background: linear-gradient(#000, #000) right 4px top 0 / 1px 100% no-repeat, #fff; }
.corner { display: flex; align-items: flex-end; justify-content: flex-end; padding: 2px 3px; }
.bookwin .corner { border-top: 1px solid #000; border-left: 1px solid #000; box-shadow: inset 0 4px #f0f0f0, inset 0 5px #000; }
.corner svg { width: 8px; height: 8px; }

.plot { flex: none; width: 460px; height: 291px; background: #fff; font: 12px "Liberation Sans", sans-serif; }
.axis { fill: none; stroke: #000; }
.ynum { text-anchor: end; }
.xnum, .ylab { text-anchor: middle; }
.layer { position: absolute; left: 0; top: 0; width: 20px; height: 20px; background: #c0c0c0; font: bold 14px/20px "Liberation Sans", sans-serif; }

.brand {
  position: absolute;
  right: 0;
  bottom: 0;
  display: flex;
  align-items: center;
  gap: 11px;
  height: 60px;
  padding: 8px 9px 0 4px;
  background: linear-gradient(#ababab, #ababab) 0 0 / 10px 10px no-repeat, #fff;
}
.brand svg { width: 38px; height: 42px; }
.brand strong { font: italic 900 36px/40px "Noto Sans CJK SC", sans-serif; white-space: nowrap; }
```
